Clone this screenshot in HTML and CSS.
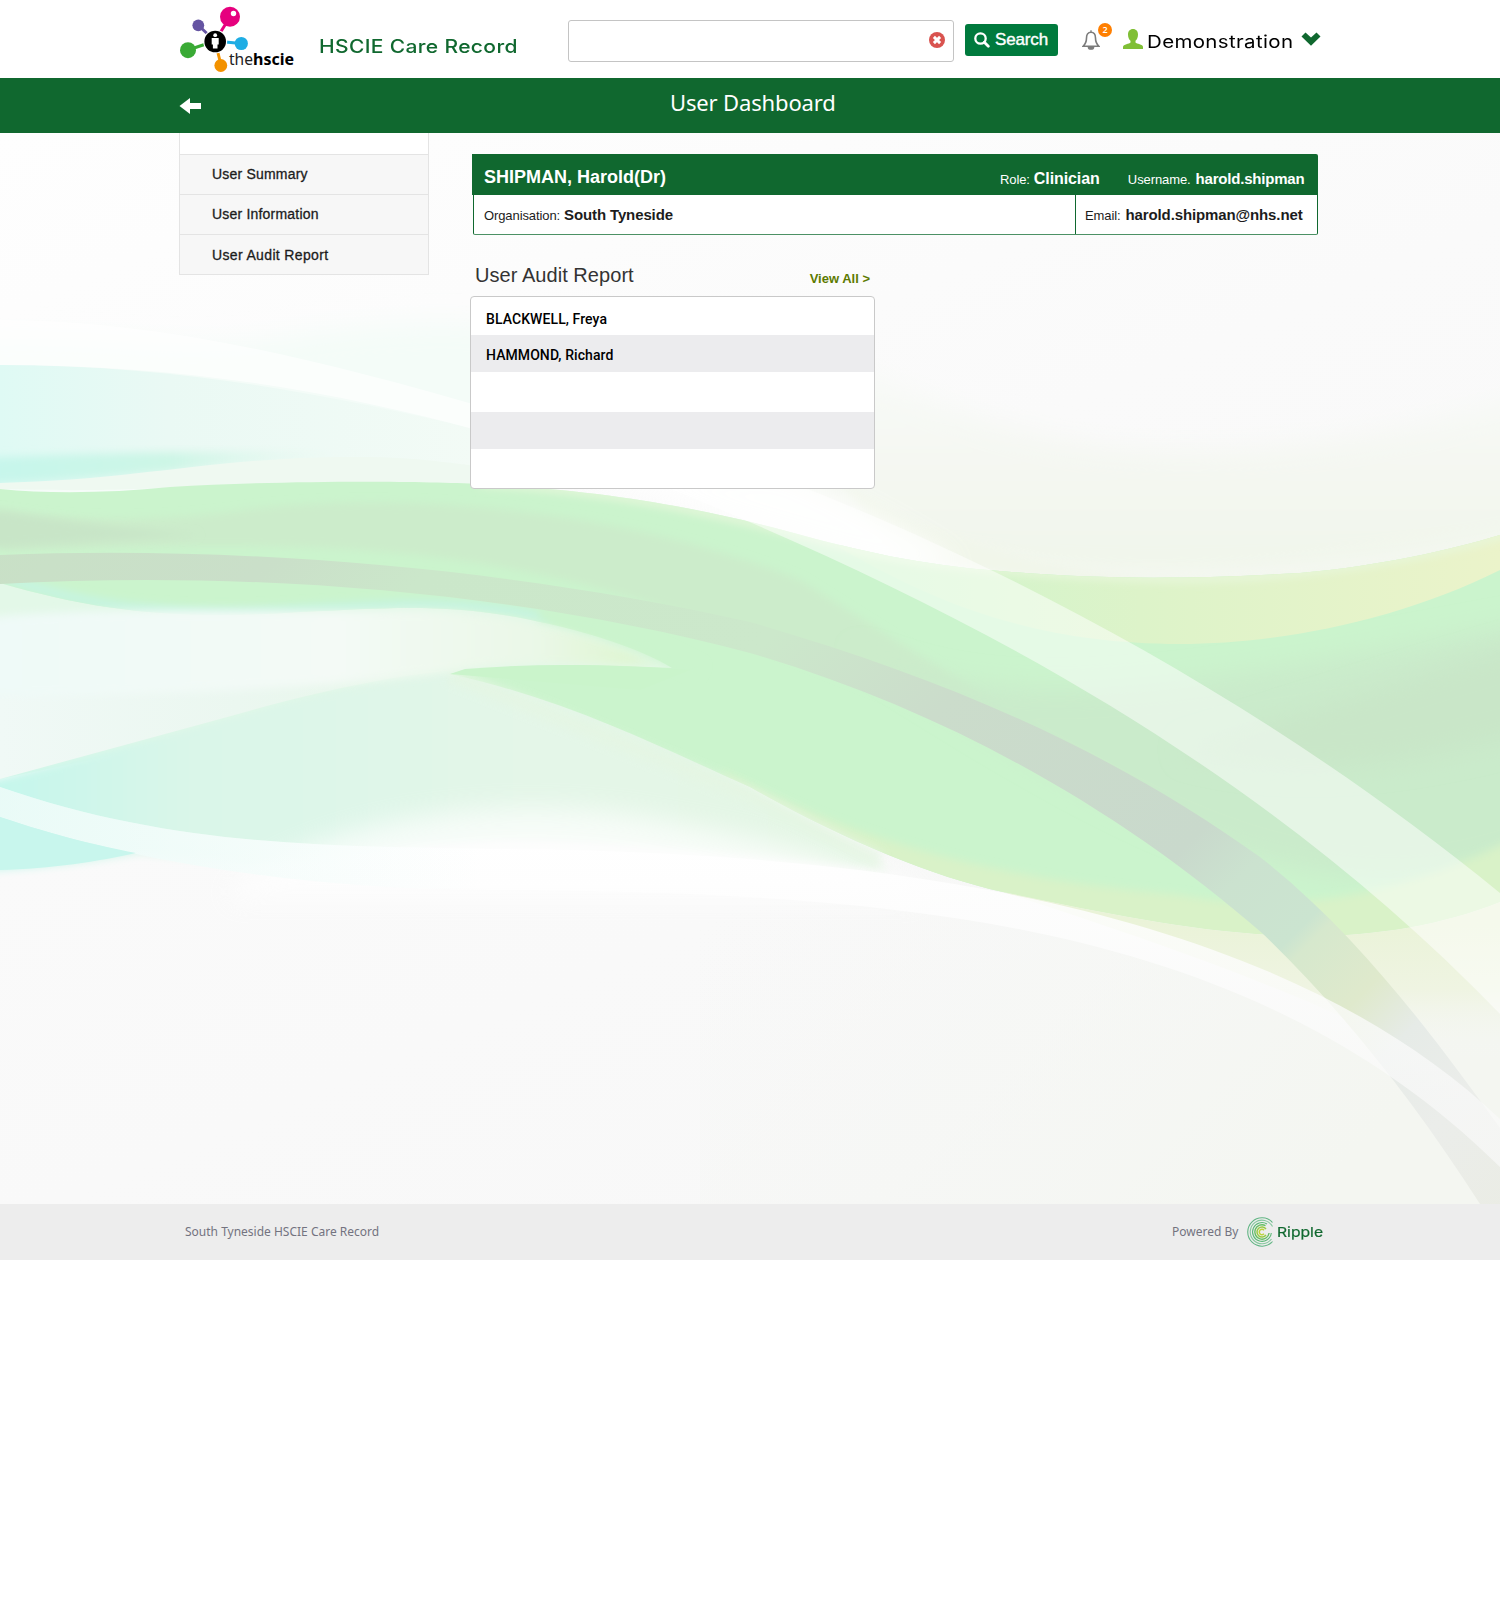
FILE: index.html
```html
<!DOCTYPE html>
<html lang="en">
<head>
<meta charset="utf-8">
<title>User Dashboard</title>
<link rel="stylesheet" href="styles.css">
</head>
<body>
<header class="header">
  <svg class="logo" width="120" height="78" viewBox="179 0 120 78">
    <g stroke-width="3">
      <path d="M215 41L230 17" stroke="#e6007e"/><path d="M215 41L198 25" stroke="#6554a2"/>
      <path d="M215 41L188 50" stroke="#3aaa35"/><path d="M215 41L241 43.500" stroke="#1eade4"/>
      <path d="M215 41L221 65" stroke="#f39200"/>
    </g>
    <circle cx="230" cy="16.800" r="10" fill="#e6007e"/><circle cx="233.500" cy="13.500" r="2.700" fill="#fff"/>
    <circle cx="198.300" cy="25.300" r="5.900" fill="#6554a2"/>
    <circle cx="188" cy="50.200" r="8" fill="#3aaa35"/>
    <circle cx="241.300" cy="43.500" r="6.600" fill="#1eade4"/>
    <circle cx="220.800" cy="65.500" r="6.400" fill="#f39200"/>
    <circle cx="215.200" cy="41.500" r="12" fill="#fff"/><circle cx="215.200" cy="41.500" r="10.800"/>
    <circle cx="215.200" cy="35.200" r="1.900" fill="#fff"/>
    <path d="M211.700 38h7v6.500h-1.200v4h-4.600v-4h-1.200z" fill="#fff"/>
    <text x="229" y="65" font-size="17" textLength="24" lengthAdjust="spacingAndGlyphs" fill="#222">the</text>
    <text x="253" y="65" font-size="16.500" font-weight="700" textLength="41" lengthAdjust="spacingAndGlyphs">hscie</text>
  </svg>
  <div class="brand"><span>HSCIE Care Record</span></div>
  <div class="search-field">
    <svg width="16" height="16" viewBox="0 0 16 16"><circle cx="8" cy="8" r="8" fill="#d9534f"/><path d="M4.900 4.900l6.200 6.200M11.100 4.900l-6.200 6.200" stroke="#fff" stroke-width="2.900"/></svg>
  </div>
  <button class="search-btn">
    <svg width="16" height="16" viewBox="0 0 16 16" fill="none" stroke="#fff"><circle cx="6.500" cy="6.500" r="5.200" stroke-width="2.300"/><path d="M10.300 10.300l4 4" stroke-width="2.800" stroke-linecap="round"/></svg>
    <span>Search</span>
  </button>
  <div class="bell">
    <svg width="18" height="20" viewBox="0 0 18 20"><path d="M9 2.200C5.800 2.200 4.500 5 4.500 8c0 4-1 6-3.400 8.300h15.800C14.500 14 13.500 12 13.500 8c0-3-1.300-5.800-4.500-5.800z" fill="none" stroke="#7c7c7c" stroke-width="1.600"/><path d="M9 .3v2M6.300 17a2.700 2.200 0 0 0 5.400 0z" fill="#7c7c7c" stroke="#7c7c7c" stroke-width="1.300"/></svg>
    <span class="badge">2</span>
  </div>
  <svg class="person" width="20" height="20" viewBox="0 0 20 20" fill="#80bf36"><path d="M10 0C6.800 0 5 2.300 5 5.500c0 2.700 1 5 2.500 6.300v1.700C6.500 15 0 15.300 0 18v2h20v-2c0-2.700-6.500-3-7.500-4.500v-1.700C14 10.500 15 8.200 15 5.500 15 2.300 13.200 0 10 0z"/></svg>
  <div class="account"><span>Demonstration</span></div>
  <svg class="chev" width="20" height="14" viewBox="0 0 20 14"><path d="M.5 4.500L4.500.5 10 5.500 15.500.5l4 4L10 13.800z" fill="#10682f"/></svg>
</header>

<div class="titlebar">
  <svg width="23" height="16" viewBox="0 0 23 16"><path d="M.5 8L11 0v5H22v6H11v5z" fill="#fff"/></svg>
  <h1>User Dashboard</h1>
</div>

<main class="main">
  <svg class="waves" viewBox="0 133 1500 1071" preserveAspectRatio="none">
    <defs>
      <linearGradient id="base" x1="0" y1="0" x2=".6" y2="1"><stop offset="0" stop-color="#fefefe"/><stop offset=".5" stop-color="#fafafa"/><stop offset="1" stop-color="#f8f8f8"/></linearGradient>
      <linearGradient id="corner" x1="0" y1="0" x2="1" y2=".6"><stop offset=".2" stop-color="#f4f6f3" stop-opacity="0"/><stop offset="1" stop-color="#f4f6f1"/></linearGradient>
      <linearGradient id="teal" x1="0" y1="0" x2="1" y2="0"><stop offset="0" stop-color="#dffaf4"/><stop offset=".35" stop-color="#eaf9f4"/><stop offset="1" stop-color="#f3fbf6"/></linearGradient>
      <linearGradient id="teal2" x1="0" y1="0" x2="1" y2="0"><stop offset="0" stop-color="#c6f6ec"/><stop offset=".5" stop-color="#cdf6e6"/><stop offset="1" stop-color="#e8f8f0" stop-opacity="0"/></linearGradient>
      <linearGradient id="pale" x1="0" y1="0" x2="890" y2="0" gradientUnits="userSpaceOnUse"><stop offset="0" stop-color="#c5f7ec"/><stop offset=".2" stop-color="#d9f6e9"/><stop offset=".6" stop-color="#e4f6e8"/><stop offset="1" stop-color="#e4f6e4"/></linearGradient>
      <linearGradient id="wisp" x1="0" y1="0" x2="672" y2="0" gradientUnits="userSpaceOnUse"><stop offset="0" stop-color="#effaf8"/><stop offset=".5" stop-color="#f4faf6"/><stop offset=".8" stop-color="#eaf8e7"/><stop offset=".93" stop-color="#e0f6d4"/><stop offset="1" stop-color="#d9f5cd" stop-opacity=".2"/></linearGradient>
      <linearGradient id="under" x1="0" y1="0" x2="475" y2="0" gradientUnits="userSpaceOnUse"><stop offset="0" stop-color="#f0f9f6"/><stop offset=".5" stop-color="#ebf7f0"/><stop offset="1" stop-color="#e6f8e8"/></linearGradient>
      <linearGradient id="rightpale" x1="0" y1="375" x2="0" y2="578" gradientUnits="userSpaceOnUse"><stop offset="0" stop-color="#f8faf7"/><stop offset=".5" stop-color="#f4f7f1"/><stop offset="1" stop-color="#f0f6ea"/></linearGradient>
      <linearGradient id="yellow" x1="900" y1="0" x2="1500" y2="0" gradientUnits="userSpaceOnUse"><stop offset="0" stop-color="#d0f5cc"/><stop offset=".4" stop-color="#ddf3c9"/><stop offset="1" stop-color="#ebf3ca"/></linearGradient>
      <linearGradient id="fade" x1="0" y1="920" x2="0" y2="1060" gradientUnits="userSpaceOnUse"><stop offset="0" stop-color="#eaf3d8"/><stop offset=".5" stop-color="#eff4e2"/><stop offset="1" stop-color="#f6f7f6" stop-opacity="0"/></linearGradient>
      <linearGradient id="dark" x1="0" y1="400" x2="1200" y2="1600" gradientUnits="userSpaceOnUse"><stop offset="0" stop-color="#c8e1c5"/><stop offset=".18" stop-color="#cadfc9"/><stop offset=".25" stop-color="#cbe7ca"/><stop offset=".42" stop-color="#cce8cb"/><stop offset=".52" stop-color="#cbdccb"/><stop offset=".68" stop-color="#c9d9cc"/><stop offset=".715" stop-color="#cbe2cf"/><stop offset=".762" stop-color="#cbe4d0"/><stop offset=".772" stop-color="#d6e8cd"/><stop offset=".815" stop-color="#dfe9cc"/><stop offset=".85" stop-color="#e6ebe7"/><stop offset=".9" stop-color="#ebedea"/><stop offset="1" stop-color="#eaece2"/></linearGradient>
      <linearGradient id="band" x1="0" y1="840" x2="0" y2="1110" gradientUnits="userSpaceOnUse"><stop offset="0" stop-color="#fff" stop-opacity=".92"/><stop offset="1" stop-color="#fafafa" stop-opacity=".65"/></linearGradient>
      <linearGradient id="bandtint" x1="0" y1="0" x2="480" y2="0" gradientUnits="userSpaceOnUse"><stop offset="0" stop-color="#d0f6ee" stop-opacity=".4"/><stop offset="1" stop-color="#d0f6ee" stop-opacity="0"/></linearGradient>
      <filter id="b4" x="-20%" y="-20%" width="140%" height="140%"><feGaussianBlur stdDeviation="4"/></filter>
      <filter id="b12" x="-20%" y="-30%" width="140%" height="160%"><feGaussianBlur stdDeviation="13"/></filter>
      <clipPath id="greenclip"><path id="gp" d="M0 489C50 494 110 493 170 487C290 480 420 481 480 484C610 491 700 508 790 532C860 551 920 565 1000 571C1090 579 1180 580 1300 573C1380 566 1450 550 1500 535V902C1440 926 1370 937 1300 936C1200 934 1100 912 1003 892C930 876 840 838 750 787C670 752 570 700 450 674C520 662 600 664 672 668C640 648 580 630 540 622C450 602 390 608 300 612C180 620 100 612 0 583z"/></clipPath>
    </defs>
    <rect y="133" width="1500" height="1071" fill="url(#base)"/>
    <rect x="700" y="700" width="800" height="504" fill="url(#corner)"/>
    <path d="M-40 340C100 330 180 360 300 335C400 320 450 325 520 325V500H-40z" fill="#f4fcf8" filter="url(#b12)"/>
    <path d="M0 365C180 365 330 395 480 430V484H0z" fill="url(#teal)"/>
    <path d="M0 320C160 320 320 360 480 406V431C330 390 180 365 0 365z" fill="#fff" opacity=".6"/>
    <path d="M-20 458C100 453 260 448 360 455C251 461 120 480 -20 484z" fill="url(#teal2)" filter="url(#b4)"/>
    <path d="M0 483C140 480 220 456 360 457C420 457 470 465 500 470V486H200C100 492 50 490 0 489z" fill="#eff9f1"/>
    <path d="M850 365C960 415 1060 450 1180 450C1320 450 1430 425 1540 390V540C1400 568 1250 580 1150 579C1000 578 900 560 700 490z" fill="url(#rightpale)" filter="url(#b12)"/>
    <path d="M840 480C900 520 980 560 1150 579C1300 578 1400 568 1540 530V560L1200 600L900 560z" fill="#f1f6ea" filter="url(#b4)"/>
    <path d="M560 470H780C850 500 920 535 960 566L900 570L700 510z" fill="#fff" opacity=".85" filter="url(#b12)"/>
    <path d="M0 570C90 600 190 610 300 600C420 590 500 590 600 620L700 672L475 680L0 779z" fill="#e3f8e8"/>
    <path d="M-40 789L220 719C320 690 400 674 475 668C620 700 690 750 800 815L890 870C750 860 650 840 500 840C400 845 330 860 250 863L140 853C100 860 50 868 -40 872z" fill="url(#pale)" filter="url(#b4)"/>
    <path d="M230 890C330 810 520 795 650 818C740 834 820 850 920 890V900H230z" fill="#fff" opacity=".7" filter="url(#b12)"/>
    <path d="M0 779L220 719C320 690 400 674 475 668L300 680L0 690z" fill="url(#under)"/>
    <use href="#gp" fill="#cbf4cd"/>
    <g clip-path="url(#greenclip)">
      <path d="M0 510C60 520 150 525 260 508C450 490 650 520 800 580L1150 800L700 620C450 530 250 545 0 550z" fill="#cceccb" filter="url(#b4)"/>
      <path d="M-40 505C30 515 80 525 200 535L-40 550z" fill="#c8e5c7" filter="url(#b4)"/>
      <path d="M840 640C1000 740 1300 660 1540 620V850C1300 940 1100 800 840 640z" fill="#caebcb" filter="url(#b12)"/>
      <path d="M1180 750C1280 720 1400 680 1540 640V730C1400 770 1280 780 1180 750z" fill="#c9e6c8" filter="url(#b12)"/>
      <path d="M850 530H1500V570C1400 620 1280 644 1180 644C1030 644 930 600 840 548z" fill="url(#yellow)"/>
      <path d="M720 770C850 840 1000 880 1180 895C1300 918 1420 890 1530 830V960H1100L760 830z" fill="#d9f2c8" filter="url(#b4)"/>
      <path d="M0 575C90 612 190 617 300 610C400 604 480 600 550 620" fill="none" stroke="#c6f4e2" stroke-width="10" filter="url(#b4)"/>
      <path d="M480 483C600 488 720 512 850 548C920 566 1050 576 1180 579C1300 578 1420 560 1520 530" fill="none" stroke="#e8f7dc" stroke-width="7" filter="url(#b4)"/>
    </g>
    <path d="M450 674L560 718L750 795L880 860" fill="none" stroke="#e5f6e3" stroke-width="16" opacity=".7" filter="url(#b4)"/>
    <path d="M-40 620C100 605 250 612 380 611C480 605 570 625 672 668C580 662 510 664 475 668C380 682 220 696 -40 697z" fill="url(#wisp)" filter="url(#b4)"/>
    <path d="M540 612C600 625 650 645 700 672" fill="none" stroke="#cbf4cd" stroke-width="16" filter="url(#b4)"/>
    <path d="M465 669C540 663 610 664 690 670L640 690L450 674z" fill="#caf4cb"/>
    <path d="M1003 892C1100 912 1200 934 1300 936C1370 937 1440 926 1500 902V1060H1430C1300 990 1150 940 1003 892z" fill="url(#fade)"/>
    <path d="M0 555C250 545 520 570 750 622C950 680 1110 750 1260 857C1360 935 1440 1045 1500 1128V1204H1480C1410 1095 1340 1008 1262 933C1120 810 950 712 750 653C520 592 250 570 0 584z" fill="url(#dark)"/>
    <path d="M785 480C1010 567 1270 705 1500 893V1014C1260 765 960 605 660 485z" fill="#fff" opacity=".5"/>
    <path d="M0 787C180 850 350 846 500 849C900 852 1280 910 1500 1119V1167C1250 920 900 893 500 890C330 890 150 868 0 817z" fill="url(#band)"/>
    <path d="M0 787C180 850 350 846 500 849V890C330 890 150 868 0 817z" fill="url(#bandtint)"/>
    <path d="M0 817C60 837 100 846 136 853C100 861 50 869 0 870z" fill="#c8f6ed"/>
  </svg>

  <nav class="side">
    <div class="side-top"></div>
    <a>User Summary</a>
    <a>User Information</a>
    <a class="last">User Audit Report</a>
  </nav>

  <section class="content">
    <div class="card">
      <div class="card-head">
        <strong class="name">SHIPMAN, Harold(Dr)</strong>
        <span class="lbl">Role:</span><strong class="role">Clinician</strong>
        <span class="lbl">Username.</span><strong class="username">harold.shipman</strong>
      </div>
      <div class="card-body">
        <div class="org"><span class="lbl">Organisation:</span><strong>South Tyneside</strong></div>
        <div class="email"><span class="lbl">Email:</span><strong>harold.shipman@nhs.net</strong></div>
      </div>
    </div>
    <div class="report-head"><h2>User Audit Report</h2><a>View All &gt;</a></div>
    <div class="list">
      <div class="row r1">BLACKWELL, Freya</div>
      <div class="row r2">HAMMOND, Richard</div>
      <div class="row r3"></div>
      <div class="row r4"></div>
      <div class="row r5"></div>
    </div>
  </section>
</main>

<footer class="footer">
  <span class="foot-left">South Tyneside HSCIE Care Record</span>
  <span class="powered">Powered By</span>
  <svg class="ripple-icon" width="30" height="30" viewBox="-15 -15 30 30" fill="none" stroke-width="1.100">
    <path d="M10.500 -9.500A14.200 14.200 0 1 0 10.500 9.500" stroke="#62b584"/>
    <path d="M10.500 -5.500A11.800 11.800 0 1 0 9.500 7" stroke="#83c79c"/>
    <path d="M5 -8A9.400 9.400 0 1 0 9.300 1" stroke="#5bb876"/>
    <path d="M3.500 -6.300A7.200 7.200 0 1 0 7.100 1" stroke="#65bd62" stroke-width="1.400"/>
    <path d="M4 -3A5 5 0 1 0 4 3" stroke="#98ca45" stroke-width="1.500"/>
    <path d="M2 -1.800A2.700 2.700 0 1 0 2 1.800" stroke="#bdd33b" stroke-width="1.500"/>
  </svg>
  <span class="ripple">Ripple</span>
</footer>
</body>
</html>
```
FILE: styles.css
```css
* { box-sizing: border-box; }
body { margin: 0; background: #fff; font-family: "Liberation Sans", Arial, sans-serif; color: #1c1c1c; }
h1, h2 { margin: 0; font-weight: 400; }
svg { display: block; flex: none; }

.header { height: 78px; padding-left: 179px; display: flex; align-items: flex-start; white-space: nowrap; }
.logo { font-family: "Noto Sans", sans-serif; }
.brand { width: 269px; padding: 34px 0 0 20px; font: 500 18.3px/24px Inter, sans-serif; letter-spacing: .3px; color: #10682f; }
.brand span, .account span, .ripple { display: inline-block; transform-origin: 0 50%; transform: scaleX(1.15); }
.search-field { width: 386px; height: 42px; margin-top: 20px; border: 1px solid #c4c4c4; border-radius: 3px; display: flex; justify-content: flex-end; padding: 11px 8px 0 0; }
.search-btn { width: 93px; height: 32px; margin: 24px 0 0 11px; padding: 0 0 0 9px; border: 0; border-radius: 3px; background: #007a3d; color: #fff; display: flex; align-items: center; gap: 5px; font: 17px "Liberation Sans", sans-serif; letter-spacing: -.15px; -webkit-text-stroke: .4px #fff; }
.bell { position: relative; margin: 30px 0 0 24px; }
.badge { position: absolute; left: 16px; top: -7px; width: 14px; height: 14px; border-radius: 7px; background: #ff7f00; color: #fff; font: 600 9px/14px "Open Sans", sans-serif; text-align: center; }
.person { margin: 29px 0 0 23px; }
.account { width: 159px; padding: 29px 0 0 4px; font: 400 17.5px/26px Inter, sans-serif; letter-spacing: .3px; color: #000; }
.account span { transform: scaleX(1.17); }
.chev { margin-top: 32px; margin-left: -1px; }

.titlebar { height: 55px; background: #10682f; display: flex; padding-left: 179px; }
.titlebar svg { margin-top: 20px; }
.titlebar h1 { margin: 9px 0 0 468px; color: #fff; font: 22px/30px "Noto Sans", sans-serif; letter-spacing: -.15px; }

.main { position: relative; height: 1071px; padding-left: 179px; display: flex; gap: 43px; align-items: flex-start; }
.waves { position: absolute; left: 0; top: 0; width: 1500px; height: 1071px; z-index: -1; }
.side { width: 250px; border: 1px solid #e4e4e4; border-top: 0; background: #f7f7f7; }
.side-top { height: 21px; background: #fff; }
.side a { display: block; height: 40px; padding-left: 32px; border-top: 1px solid #e4e4e4; font-size: 14px; line-height: 39px; letter-spacing: .2px; -webkit-text-stroke: .3px #1c1c1c; }
.side .last { line-height: 41px; letter-spacing: .35px; }

.content { width: 848px; padding-top: 21px; }
.card { width: 846px; }
.card-head { height: 41px; padding-left: 12px; background: #10682f; color: #fff; border-radius: 0 2px 0 0; display: flex; align-items: baseline; line-height: 48px; }
.name { width: 516px; font-size: 18px; position: relative; top: -1px; }
.lbl { font-size: 13px; font-weight: 400; margin-right: 5px; letter-spacing: -.1px; }
.role { width: 94px; margin-left: -1px; font-size: 16px; letter-spacing: -.1px; }
.username { font-size: 15px; letter-spacing: -.2px; }
.card-body { height: 40px; margin-left: 1px; display: flex; background: #fff; border: 1px solid #10682f; border-top: 0; border-bottom-color: #4c9165; border-radius: 0 0 2px 2px; line-height: 39px; font-size: 15px; letter-spacing: -.12px; }
.org { width: 601px; padding-left: 10px; }
.org .lbl { margin-right: 4px; }
.email { padding-left: 9px; border-left: 1px solid #10682f; white-space: nowrap; }
.report-head { height: 61px; width: 398px; padding: 28px 0 0 3px; display: flex; justify-content: space-between; align-items: baseline; }
.report-head h2 { font-size: 20px; line-height: 24px; letter-spacing: .05px; color: #333; }
.report-head a { position: relative; top: 1px; font-size: 13px; font-weight: 700; color: #5c7a00; }
.list { width: 405px; height: 193px; margin-left: -2px; border: 1px solid #c9c9c9; border-radius: 4px; background: #fff; overflow: hidden; }
.row { padding-left: 15px; font: 500 14px/36px Roboto, sans-serif; letter-spacing: .08px; color: #000; }
.r1 { height: 38px; padding-top: 4px; }
.r2, .r4 { height: 37px; background: #ececee; }
.r2 { line-height: 40px; }
.r3 { height: 40px; }
.r5 { height: 39px; }

.footer { height: 56px; padding: 0 0 2px 185px; background: #ededed; display: flex; align-items: center; font: 12px "Noto Sans", sans-serif; color: #737380; }
.foot-left { width: 987px; }
.powered { width: 75px; }
.ripple-icon { position: relative; top: 1px; }
.ripple { padding-top: 2px; font: 400 13.2px Inter, sans-serif; transform: scaleX(1.19); color: #10682f; -webkit-text-stroke: .2px #10682f; }
```
